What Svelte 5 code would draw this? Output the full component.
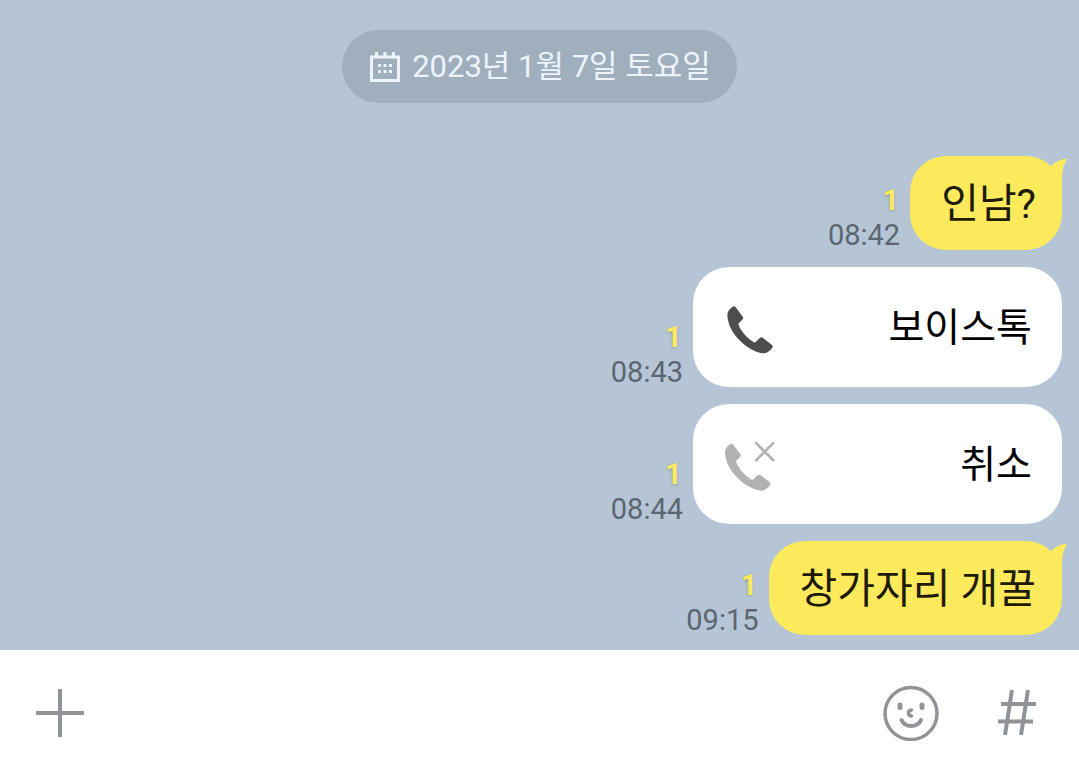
<script>
  const messages = [
    { kind: 'text', text: '인남?', time: '08:42', unread: 1 },
    { kind: 'call', text: '보이스톡', time: '08:43', unread: 1 },
    { kind: 'cancelled', text: '취소', time: '08:44', unread: 1 },
    { kind: 'text', text: '창가자리 개꿀', time: '09:15', unread: 1 }
  ];
  let draft = $state('');
</script>

<div class="screen">
  <main class="chat">
    <button class="date" type="button">
      <svg width="30" height="30" viewBox="0 0 30 30" aria-hidden="true">
        <path d="M1.5 5H28.5V28.5H1.5Z" fill="none" stroke="currentColor" stroke-width="3" />
        <path d="M6.5 0V6M15 0V6M23.5 0V6" stroke="currentColor" stroke-width="3" />
        <path d="M8 13.5h3m2.500 0h3m2.500 0h3M8 19.500h3m2.500 0h3m2.500 0h3" stroke="currentColor" stroke-width="3" />
      </svg>
      <span>2023년 1월 7일 토요일</span>
    </button>

    <ol class="messages">
      {#each messages as m}
        <li class="row">
          <div class="meta">
            <span class="unread">{m.unread}</span>
            <time>{m.time}</time>
          </div>
          {#if m.kind === 'text'}
            <p class="bubble">
              {m.text}
              <svg class="tail" width="24" height="40" viewBox="0 0 24 40" aria-hidden="true">
                <path d="M7 10Q14 3 23.500 2.500Q18 10 18 22V37L5 12Z" fill="currentColor" />
              </svg>
            </p>
          {:else}
            <div class="card" class:off={m.kind === 'cancelled'}>
              <svg width="52" height="52" viewBox="0 0 156 156" aria-hidden="true">
                <g transform={m.kind === 'call' ? 'translate(7 13)' : 'translate(0 14)'}>
                  <path
                    d="M16 1Q21-2 25 3L46 31Q49 35 46 39L33 52Q34 60 43 73Q58 95 80 108Q84 109 87 105L97 95Q102 91 107 95L133 115Q139 120 134 126Q121 142 108 141C70 138 2 88 0 26Q0 12 16 1Z"
                    fill="currentColor"
                  />
                </g>
                {#if m.kind === 'cancelled'}
                  <path d="M91 10L147 66M147 10L91 66" stroke="currentColor" stroke-width="8" />
                {/if}
              </svg>
              <span>{m.text}</span>
            </div>
          {/if}
        </li>
      {/each}
    </ol>
  </main>

  <footer class="composer">
    <button type="button" aria-label="추가">
      <svg width="48" height="48" viewBox="0 0 48 48" aria-hidden="true">
        <path d="M0 24H48M24 0V48" stroke="currentColor" stroke-width="4" />
      </svg>
    </button>
    <input type="text" aria-label="메시지 입력" bind:value={draft} />
    <button type="button" aria-label="이모티콘">
      <svg width="56" height="56" viewBox="0 0 56 56" fill="none" stroke="currentColor" stroke-linecap="round" aria-hidden="true">
        <circle cx="28" cy="28.500" r="26" stroke-width="3.500" />
        <path d="M17 20V22.500M39 20V22.500" stroke-width="5" />
        <path d="M28.500 25Q25.500 25.500 25.500 28Q25.500 30.500 28.500 31" stroke-width="3.500" />
        <path d="M18.500 35C22 43 34.500 43 38 35" stroke-width="4" />
      </svg>
    </button>
    <button type="button" aria-label="샵 검색">
      <svg width="40" height="48" viewBox="0 0 40 48" fill="none" stroke="currentColor" stroke-width="4" aria-hidden="true">
        <path d="M15 1L8 46M31 1L24 46M4 15H39M1 32.500H36" />
      </svg>
    </button>
  </footer>
</div>

<style>
  :global(body) {
    margin: 0;
    background: #fff;
  }
  .screen {
    min-height: 100vh;
    display: flex;
    flex-direction: column;
    font-family: Roboto, 'Noto Sans CJK KR', sans-serif;
  }
  .chat {
    display: flex;
    flex-direction: column;
    align-items: center;
    gap: 53px;
    padding: 30px 17px 15px;
    background: #b5c5d6;
  }
  button {
    border: 0;
    padding: 0;
    background: none;
    color: inherit;
    font: inherit;
  }
  svg {
    display: block;
    flex: none;
  }
  .date {
    display: flex;
    align-items: center;
    gap: 12px;
    height: 73px;
    padding: 0 26px 0 28px;
    border-radius: 37px;
    background: #9fafbd;
    color: #edf3f9;
    font-size: 31px;
    line-height: 40px;
    white-space: nowrap;
  }
  .messages {
    align-self: stretch;
    display: flex;
    flex-direction: column;
    gap: 17px;
    margin: 0;
    padding: 0;
    list-style: none;
  }
  .row {
    display: flex;
    justify-content: flex-end;
    align-items: flex-end;
    gap: 10px;
  }
  .meta {
    display: flex;
    flex-direction: column;
    align-items: flex-end;
    gap: 6px;
    font-size: 29px;
    line-height: 29px;
    color: #5c6670;
  }
  .unread {
    padding-right: 1px;
    color: #fae962;
    font-weight: 700;
    text-shadow: 0 1px 3px rgba(90, 90, 60, 0.4);
  }
  .bubble {
    position: relative;
    margin: 0;
    padding: 18px 26px 16px 31px;
    border-radius: 36px;
    background: #fcea5c;
    color: #1e1c08;
    font-size: 41px;
    line-height: 60px;
  }
  .tail {
    position: absolute;
    top: 0;
    right: -6px;
    color: #fcea5c;
  }
  .card {
    display: flex;
    align-items: center;
    justify-content: space-between;
    box-sizing: border-box;
    min-width: 369px;
    padding: 31px 30px 29px 32px;
    border-radius: 36px;
    background: #fff;
    color: #000;
    font-size: 39px;
    line-height: 60px;
  }
  .card svg {
    color: #4d4d4d;
  }
  .card.off svg {
    color: #b2b2b2;
  }
  .composer {
    flex: 1;
    display: flex;
    align-items: center;
    min-height: 125px;
    box-sizing: border-box;
    padding: 0 42px 0 36px;
    background: #fff;
    color: #909499;
  }
  .composer input {
    flex: 1;
    min-width: 0;
    height: 60px;
    margin: 0 24px;
    padding: 0;
    border: 0;
    outline: 0;
    background: none;
    color: #1e1e1e;
    font: inherit;
    font-size: 39px;
  }
  .composer button:last-child {
    margin-left: 58px;
  }
</style>
